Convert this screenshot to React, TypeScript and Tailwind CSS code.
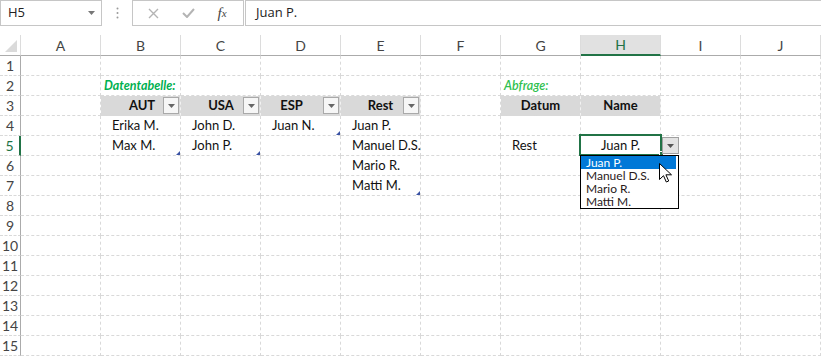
import type { ReactNode } from 'react'

const COLS = ['A', 'B', 'C', 'D', 'E', 'F', 'G', 'H', 'I', 'J']
const ROWS = Array.from({ length: 15 }, (_, i) => i + 1)

const cellFont = { fontFamily: 'Lato, "Liberation Sans", sans-serif' }

function DownTri({ color = '#555' }: { color?: string }) {
  return (
    <svg width="7" height="4" viewBox="0 0 7 4">
      <path d="M0 0h7L3.5 4z" fill={color} />
    </svg>
  )
}

function FilterBtn() {
  return (
    <span className="absolute right-[1px] top-[1px] flex h-[17px] w-[16px] items-center justify-center border border-[#a9a9a9] bg-[#f6f6f6]">
      <DownTri color="#666" />
    </span>
  )
}

function Handle() {
  return (
    <span className="absolute bottom-[0px] right-[0px] h-0 w-0 border-b-[4px] border-l-[4px] border-b-[#3a53a4] border-l-transparent" />
  )
}

function Cursor() {
  return (
    <svg className="absolute left-[78px] top-[27px] z-30" width="13" height="20" viewBox="0 0 13 20">
      <path d="M0.5 0.5v16l4-3.8 2.8 6.3 2.4-1-2.8-6.2h5.6z" fill="#fff" stroke="#000" strokeWidth="1" strokeLinejoin="round" />
    </svg>
  )
}

function DropList() {
  const items = ['Juan P.', 'Manuel D.S.', 'Mario R.', 'Matti M.']
  return (
    <div className="absolute left-[-1px] top-[19px] z-20 w-[99px] border border-black bg-white" style={cellFont}>
      {items.map((it, i) => (
        <div
          key={it}
          className={
            'h-[13px] overflow-hidden whitespace-nowrap pl-[5px] text-[12px] leading-[13px] ' +
            (i === 0 ? 'mr-[2px] bg-[#0078d7] text-white' : 'text-[#2a1a1a]')
          }
        >
          {it}
        </div>
      ))}
    </div>
  )
}

function text(s: string) {
  return <span className="whitespace-nowrap pl-[11px] text-[13px] leading-[19px] text-[#111]">{s}</span>
}

function head(s: string, extra = '') {
  return (
    <span className={'block w-full whitespace-nowrap text-center text-[13px] font-bold leading-[19px] text-[#111] ' + extra}>
      {s}
    </span>
  )
}

function content(col: string, row: number): { node?: ReactNode; gray?: boolean } {
  const k = col + row
  switch (k) {
    case 'B2':
      return {
        node: (
          <span className="whitespace-nowrap pl-[3px] text-[12.5px] font-bold italic leading-[19px] text-[#00b050]">
            Datentabelle:
          </span>
        ),
      }
    case 'G2':
      return {
        node: (
          <span className="whitespace-nowrap pl-[3px] text-[12.5px] font-semibold italic leading-[19px] text-[#2fbf4f]">
            Abfrage:
          </span>
        ),
      }
    case 'B3':
      return { gray: true, node: <>{head('AUT', 'pl-[3px]')}<FilterBtn /></> }
    case 'C3':
      return { gray: true, node: <>{head('USA', 'pl-[1px]')}<FilterBtn /></> }
    case 'D3':
      return { gray: true, node: <>{head('ESP', 'pr-[18px]')}<FilterBtn /></> }
    case 'E3':
      return { gray: true, node: <>{head('Rest')}<FilterBtn /></> }
    case 'G3':
      return { gray: true, node: head('Datum') }
    case 'H3':
      return { gray: true, node: head('Name') }
    case 'B4':
      return { node: text('Erika M.') }
    case 'C4':
      return { node: text('John D.') }
    case 'D4':
      return { node: <>{text('Juan N.')}<Handle /></> }
    case 'E4':
      return { node: text('Juan P.') }
    case 'B5':
      return { node: <>{text('Max M.')}<Handle /></> }
    case 'C5':
      return { node: <>{text('John P.')}<Handle /></> }
    case 'E5':
      return { node: text('Manuel D.S.') }
    case 'G5':
      return { node: text('Rest') }
    case 'H5':
      return {
        node: (
          <>
            <span className="block w-full text-center text-[13px] leading-[19px] text-[#111]">Juan P.</span>
            <span className="absolute left-[-2px] top-[-2px] z-10 h-[22px] w-[83px] border-2 border-[#217346]" />
            <span className="absolute left-[78px] top-[15px] z-10 h-[5px] w-[5px] border border-white bg-[#217346]" />
            <span className="absolute left-[81px] top-[1px] z-20 flex h-[17px] w-[17px] items-center justify-center border border-[#a0a0a0] bg-[#e3e3e3]">
              <DownTri color="#555" />
            </span>
            <DropList />
            <Cursor />
          </>
        ),
      }
    case 'E6':
      return { node: text('Mario R.') }
    case 'E7':
      return { node: <>{text('Matti M.')}<Handle /></> }
  }
  return {}
}

export default function App() {
  return (
    <div className="h-[356px] w-[821px] overflow-hidden bg-white" style={cellFont}>
      {/* formula bar */}
      <div className="flex h-[26px]">
        <div className="flex w-[102px] items-center justify-between border border-[#c6c6c6] pl-[7px] pr-[6px]">
          <span className="text-[13px] text-[#222]" style={{ fontFamily: '"Open Sans", sans-serif' }}>H5</span>
          <DownTri color="#777" />
        </div>
        <div className="flex w-[30px] items-center justify-center">
          <svg width="3" height="12" viewBox="0 0 3 12">
            <circle cx="1.5" cy="1.5" r="1" fill="#9a9a9a" />
            <circle cx="1.5" cy="6" r="1" fill="#9a9a9a" />
            <circle cx="1.5" cy="10.5" r="1" fill="#9a9a9a" />
          </svg>
        </div>
        <div className="flex w-[112px] items-center border border-[#c6c6c6]">
          <span className="flex w-[38px] justify-center pl-[2px]">
            <svg width="11" height="11" viewBox="0 0 11 11">
              <path d="M1 1l9 9M10 1l-9 9" stroke="#b4b4b4" strokeWidth="1.4" />
            </svg>
          </span>
          <span className="flex w-[34px] justify-center">
            <svg width="13" height="10" viewBox="0 0 13 10">
              <path d="M1 5l4 4 7-8" stroke="#b4b4b4" strokeWidth="2" fill="none" />
            </svg>
          </span>
          <span
            className="flex w-[34px] justify-center text-[15px] italic text-[#444]"
            style={{ fontFamily: '"Liberation Serif", serif' }}
          >
            f<span className="pt-[3px] text-[11px]">x</span>
          </span>
        </div>
        <div className="ml-[1px] flex flex-1 items-center border border-r-0 border-[#c6c6c6] pl-[10px]">
          <span className="text-[13px] text-[#222]" style={{ fontFamily: '"Open Sans", sans-serif' }}>Juan P.</span>
        </div>
      </div>

      <div className="h-[9px]" />

      {/* column headers */}
      <div className="flex h-[21px]">
        <div className="relative h-[21px] w-[21px] border-b border-r border-b-[#ababab] border-r-[#dcdcdc]">
          <svg className="absolute left-[5px] top-[5px]" width="12" height="12" viewBox="0 0 12 12">
            <path d="M12 0v12H0z" fill="#dadada" />
          </svg>
        </div>
        {COLS.map((c) => (
          <div
            key={c}
            className={
              'flex h-[21px] w-[80px] items-center justify-center border-r text-[14px] ' +
              (c === 'H'
                ? 'border-b-2 border-b-[#217346] border-r-[#dcdcdc] bg-[#e1e1e1] text-[#217346]'
                : 'border-b border-b-[#ababab] border-r-[#dcdcdc] text-[#444]')
            }
          >
            {c}
          </div>
        ))}
      </div>

      {/* grid */}
      {ROWS.map((r) => (
        <div key={r} className="flex h-[20px]">
          <div
            className={
              'flex h-[20px] w-[21px] items-center justify-center border-b border-r border-dashed border-b-[#d9d9d9] text-[14px] [border-right-style:solid] ' +
              (r === 5 ? 'border-r-2 border-r-[#217346] text-[#217346]' : 'border-r-[#ababab] text-[#444]')
            }
          >
            {r}
          </div>
          {COLS.map((c) => {
            const { node, gray } = content(c, r)
            return (
              <div
                key={c}
                className={
                  'relative flex h-[20px] w-[80px] items-start border-b border-r border-dashed ' +
                  (gray ? 'border-b-[#d9d9d9] border-r-[#f2f2f2] bg-[#d9d9d9]' : 'border-[#d9d9d9]')
                }
              >
                {node}
              </div>
            )
          })}
        </div>
      ))}
    </div>
  )
}
